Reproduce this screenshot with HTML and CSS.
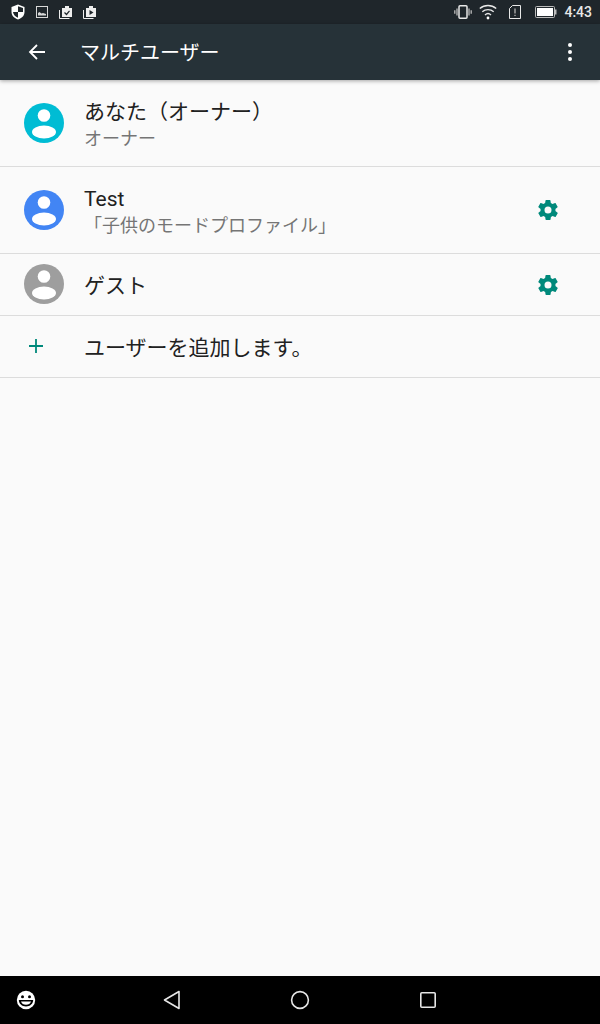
FILE: index.html
```html
<!DOCTYPE html>
<html>
<head>
  <meta charset="utf-8">
  <title>マルチユーザー</title>
  <link rel="stylesheet" href="styles.css">
</head>
<body>
  <div class="screen">
    <div class="status-bar">
      <div class="status-left">
        <svg width="16" height="16" viewBox="0 0 16 16"><path fill="#fff" d="M8 0.5 14.500 3v5c0 3.600-2.800 6.400-6.500 7.500C4.300 14.400 1.500 11.600 1.500 8V3z"/><path fill="#1f262b" d="M8 2.200V8H3c.3 2.600 2.300 4.700 5 5.700V8h5V3.900z"/></svg>
        <svg width="12" height="12" viewBox="0 0 12 12"><rect x=".5" y=".5" width="11" height="11" fill="none" stroke="#d8d8d8"/><path fill="#d8d8d8" d="M2 9.500V7l1.500-1 2 1.500L7 7l3 1v1.500z"/></svg>
        <svg width="16" height="14" viewBox="0 0 16 14"><path fill="#eee" d="M4 3h3V1h4v2h3v9H4z"/><path fill="none" stroke="#eee" d="M1.500 5v8.500h10"/><path fill="none" stroke="#1f262b" stroke-width="1.200" d="M6.500 7.500 8.500 9.500 11.500 5.800"/></svg>
        <svg class="status-last" width="16" height="14" viewBox="0 0 16 14"><path fill="#eee" d="M4 3h3V1h4v2h3v9H4z"/><path fill="none" stroke="#eee" d="M1.500 5v8.500h10"/><path fill="#1f262b" d="M7.500 5v5l4-2.500z"/></svg>
      </div>
      <div class="status-right">
        <svg class="vibrate" width="18" height="14" viewBox="0 0 18 14"><rect x="5" y=".8" width="8" height="12.400" rx="1" fill="none" stroke="#e8e8e8" stroke-width="1.500"/><path fill="none" stroke="#bbb" stroke-width="1.300" d="M3 3.500v7M15 3.500v7M.8 5.200v3.600M17.200 5.200v3.600"/></svg>
        <svg class="wifi" width="18" height="16" viewBox="0 0 18 16"><g fill="none" stroke="#e8e8e8" stroke-width="1.400"><path d="M.8 4.500C5.500.4 12.500.4 17.200 4.500"/><path d="M3.300 7.700C6.500 4.900 11.500 4.900 14.700 7.700"/><path d="M6 10.900C7.700 9.400 10.300 9.400 12 10.900"/></g><circle cx="9" cy="14" r="1.400" fill="#fff"/></svg>
        <svg class="sim" width="12" height="14" viewBox="0 0 12 14"><path fill="none" stroke="#e8e8e8" d="M3.500 .5h8v13H.5V3.500z"/><path fill="#aaa" d="M5.300 3.500h1.400v5H5.300zM5.300 9.700h1.400v1.400H5.300z"/></svg>
        <svg class="battery" width="22" height="12" viewBox="0 0 22 12"><rect x=".5" y=".5" width="19" height="11" rx="1" fill="#1f262b" stroke="#bbb"/><rect x="2" y="2" width="16" height="8" fill="#fff"/><rect x="20" y="3.500" width="1.500" height="5" fill="#bbb"/></svg>
        <span class="clock">4:43</span>
      </div>
    </div>

    <div class="toolbar">
      <svg class="back-arrow" width="18" height="16" viewBox="0 0 18 16"><path fill="none" stroke="#fff" stroke-width="1.800" d="M17 8H2M9 1 2 8l7 7"/></svg>
      <div class="toolbar-title">マルチユーザー</div>
      <div class="overflow-menu"><span></span><span></span><span></span></div>
    </div>

    <div class="user-list">
      <div class="user-row row-owner">
        <svg class="avatar" width="40" height="40" viewBox="0 0 40 40"><circle cx="20" cy="20" r="20" fill="#00bcd4"/><circle cx="20" cy="12.500" r="6.300" fill="#fff"/><ellipse cx="20" cy="29" rx="12" ry="6.500" fill="#fff"/></svg>
        <div class="user-text">
          <div class="user-name">あなた（オーナー）</div>
          <div class="user-sub">オーナー</div>
        </div>
      </div>
      <div class="user-row row-test">
        <svg class="avatar" width="40" height="40" viewBox="0 0 40 40"><circle cx="20" cy="20" r="20" fill="#4285f4"/><circle cx="20" cy="12.500" r="6.300" fill="#fff"/><ellipse cx="20" cy="29" rx="12" ry="6.500" fill="#fff"/></svg>
        <div class="user-text">
          <div class="user-name">Test</div>
          <div class="user-sub">「子供のモードプロファイル」</div>
        </div>
        <svg class="gear" width="24" height="24" viewBox="0 0 24 24"><path fill="#00897b" fill-rule="evenodd" d="M19.400 13c.04-.32.1-.66.1-1s-.06-.68-.1-1l2.100-1.650c.2-.15.25-.42.12-.64l-2-3.460c-.12-.22-.4-.3-.6-.22l-2.500 1c-.52-.4-1.080-.73-1.700-.98l-.37-2.650A.5.500 0 0 0 14 2h-4a.5.500 0 0 0-.5.420l-.37 2.650c-.62.25-1.180.58-1.700.98l-2.500-1c-.22-.08-.48 0-.6.220l-2 3.460c-.13.220-.07.490.12.640L4.600 11c-.04.320-.1.660-.1 1s.06.680.1 1l-2.100 1.650c-.2.150-.25.420-.12.640l2 3.460c.12.220.4.300.6.220l2.500-1c.52.400 1.080.730 1.700.980l.37 2.650c.05.240.26.420.5.420h4c.24 0 .45-.18.500-.42l.37-2.650c.62-.25 1.180-.58 1.700-.98l2.500 1c.22.080.48 0 .6-.22l2-3.460c.13-.22.070-.49-.12-.64zM12 15.500a3.500 3.500 0 1 1 0-7 3.500 3.500 0 0 1 0 7z"/></svg>
      </div>
      <div class="user-row row-guest">
        <svg class="avatar" width="40" height="40" viewBox="0 0 40 40"><circle cx="20" cy="20" r="20" fill="#9e9e9e"/><circle cx="20" cy="12.500" r="6.300" fill="#fff"/><ellipse cx="20" cy="29" rx="12" ry="6.500" fill="#fff"/></svg>
        <div class="user-text">
          <div class="user-name">ゲスト</div>
        </div>
        <svg class="gear" width="24" height="24" viewBox="0 0 24 24"><path fill="#00897b" fill-rule="evenodd" d="M19.400 13c.04-.32.1-.66.1-1s-.06-.68-.1-1l2.100-1.650c.2-.15.25-.42.12-.64l-2-3.460c-.12-.22-.4-.3-.6-.22l-2.500 1c-.52-.4-1.080-.73-1.700-.98l-.37-2.650A.5.500 0 0 0 14 2h-4a.5.500 0 0 0-.5.420l-.37 2.650c-.62.25-1.180.58-1.700.98l-2.500-1c-.22-.08-.48 0-.6.220l-2 3.460c-.13.220-.07.490.12.640L4.600 11c-.04.320-.1.660-.1 1s.06.680.1 1l-2.100 1.650c-.2.150-.25.420-.12.640l2 3.460c.12.220.4.300.6.220l2.500-1c.52.400 1.080.730 1.700.980l.37 2.650c.05.240.26.420.5.420h4c.24 0 .45-.18.500-.42l.37-2.650c.62-.25 1.180-.58 1.700-.98l2.500 1c.22.080.48 0 .6-.22l2-3.460c.13-.22.070-.49-.12-.64zM12 15.500a3.500 3.500 0 1 1 0-7 3.500 3.500 0 0 1 0 7z"/></svg>
      </div>
      <div class="user-row row-add">
        <svg class="plus" width="24" height="16" viewBox="0 0 24 16"><path fill="none" stroke="#00897b" stroke-width="1.800" d="M5 8h14M12 1v14"/></svg>
        <div class="user-text">
          <div class="user-name">ユーザーを追加します。</div>
        </div>
      </div>
    </div>

    <div class="nav-bar">
      <svg class="nav-smile" width="20" height="20" viewBox="0 0 20 20"><circle cx="10" cy="10" r="9.200" fill="#fff"/><circle cx="6.500" cy="6.800" r="1.500"/><circle cx="13.500" cy="6.800" r="1.500"/><path d="M2.800 10h14.400c0 3.800-3.200 6.400-7.200 6.400S2.800 13.800 2.800 10z"/><path fill="#fff" d="M5 11.500h10c-.5 2-2.500 3.300-5 3.300s-4.500-1.300-5-3.300z"/></svg>
      <svg class="nav-back" width="18" height="20" viewBox="0 0 18 20"><path fill="none" stroke="#e6e6e6" stroke-width="1.600" stroke-linejoin="round" d="M16 1.500v17L1.500 10z"/></svg>
      <svg class="nav-home" width="20" height="20" viewBox="0 0 20 20"><circle cx="10" cy="10" r="8.400" fill="none" stroke="#e6e6e6" stroke-width="1.600"/></svg>
      <svg class="nav-recent" width="18" height="18" viewBox="0 0 18 18"><rect x="1.800" y="1.800" width="14.400" height="14.400" rx="1" fill="none" stroke="#e6e6e6" stroke-width="1.600"/></svg>
    </div>
  </div>
</body>
</html>
```

FILE: styles.css
```css
* {
  box-sizing: border-box;
}

body {
  margin: 0;
  font-family: Roboto, "Noto Sans CJK JP", sans-serif;
  background-color: #fafafa;
}

svg {
  display: block;
  flex-shrink: 0;
}

.screen {
  display: flex;
  flex-direction: column;
  width: 600px;
  height: 1024px;
  overflow: hidden;
}

.status-bar {
  display: flex;
  align-items: center;
  justify-content: space-between;
  height: 24px;
  padding: 0 8px 0 10px;
  background: #1f262b;
}

.status-left {
  display: flex;
  align-items: center;
  gap: 10px;
}

.status-last {
  margin-left: -2px;
}

.status-right {
  display: flex;
  align-items: center;
}

.wifi {
  margin-left: 7px;
}

.sim {
  margin-left: 12px;
}

.battery {
  margin-left: 14px;
}

.clock {
  margin-left: 7px;
  color: #e8e8e8;
  font-size: 14px;
  font-weight: 500;
}

.toolbar {
  position: relative;
  z-index: 1;
  display: flex;
  align-items: center;
  height: 56px;
  padding-left: 28px;
  background: #263238;
  box-shadow: 0 1px 4px rgba(0, 0, 0, 0.35);
}

.toolbar-title {
  flex: 1;
  margin-left: 34px;
  margin-bottom: 2px;
  color: #fff;
  font-size: 20px;
}

.overflow-menu {
  display: flex;
  flex-direction: column;
  gap: 3px;
  margin-right: 28px;
}

.overflow-menu span {
  width: 4px;
  height: 4px;
  border-radius: 50%;
  background: #fff;
}

.user-list {
  flex: 1;
  padding-top: 1px;
}

.user-row {
  display: flex;
  align-items: center;
  padding-left: 24px;
  padding-right: 40px;
  border-bottom: 1px solid #dcdcdc;
}

.row-owner {
  height: 86px;
}

.row-test {
  height: 87px;
}

.row-guest,
.row-add {
  height: 62px;
}

.row-owner .avatar,
.row-guest .avatar {
  margin-top: -2px;
}

.user-text {
  flex: 1;
  margin-left: 20px;
  padding-top: 2px;
}

.row-owner .user-text {
  padding-top: 3px;
}

.row-test .user-text {
  padding-top: 5px;
}

.user-name {
  color: #212121;
  font-size: 21px;
  line-height: 26px;
}

.user-sub {
  margin-top: 1px;
  color: #757575;
  font-size: 18px;
  line-height: 26px;
}

.plus {
  margin-right: 16px;
  margin-top: -2px;
}

.nav-bar {
  display: flex;
  align-items: center;
  height: 48px;
  padding-left: 16px;
  background: #000;
}

.nav-back {
  margin-left: 127px;
}

.nav-home {
  margin-left: 109px;
}

.nav-recent {
  margin-left: 109px;
}
```
